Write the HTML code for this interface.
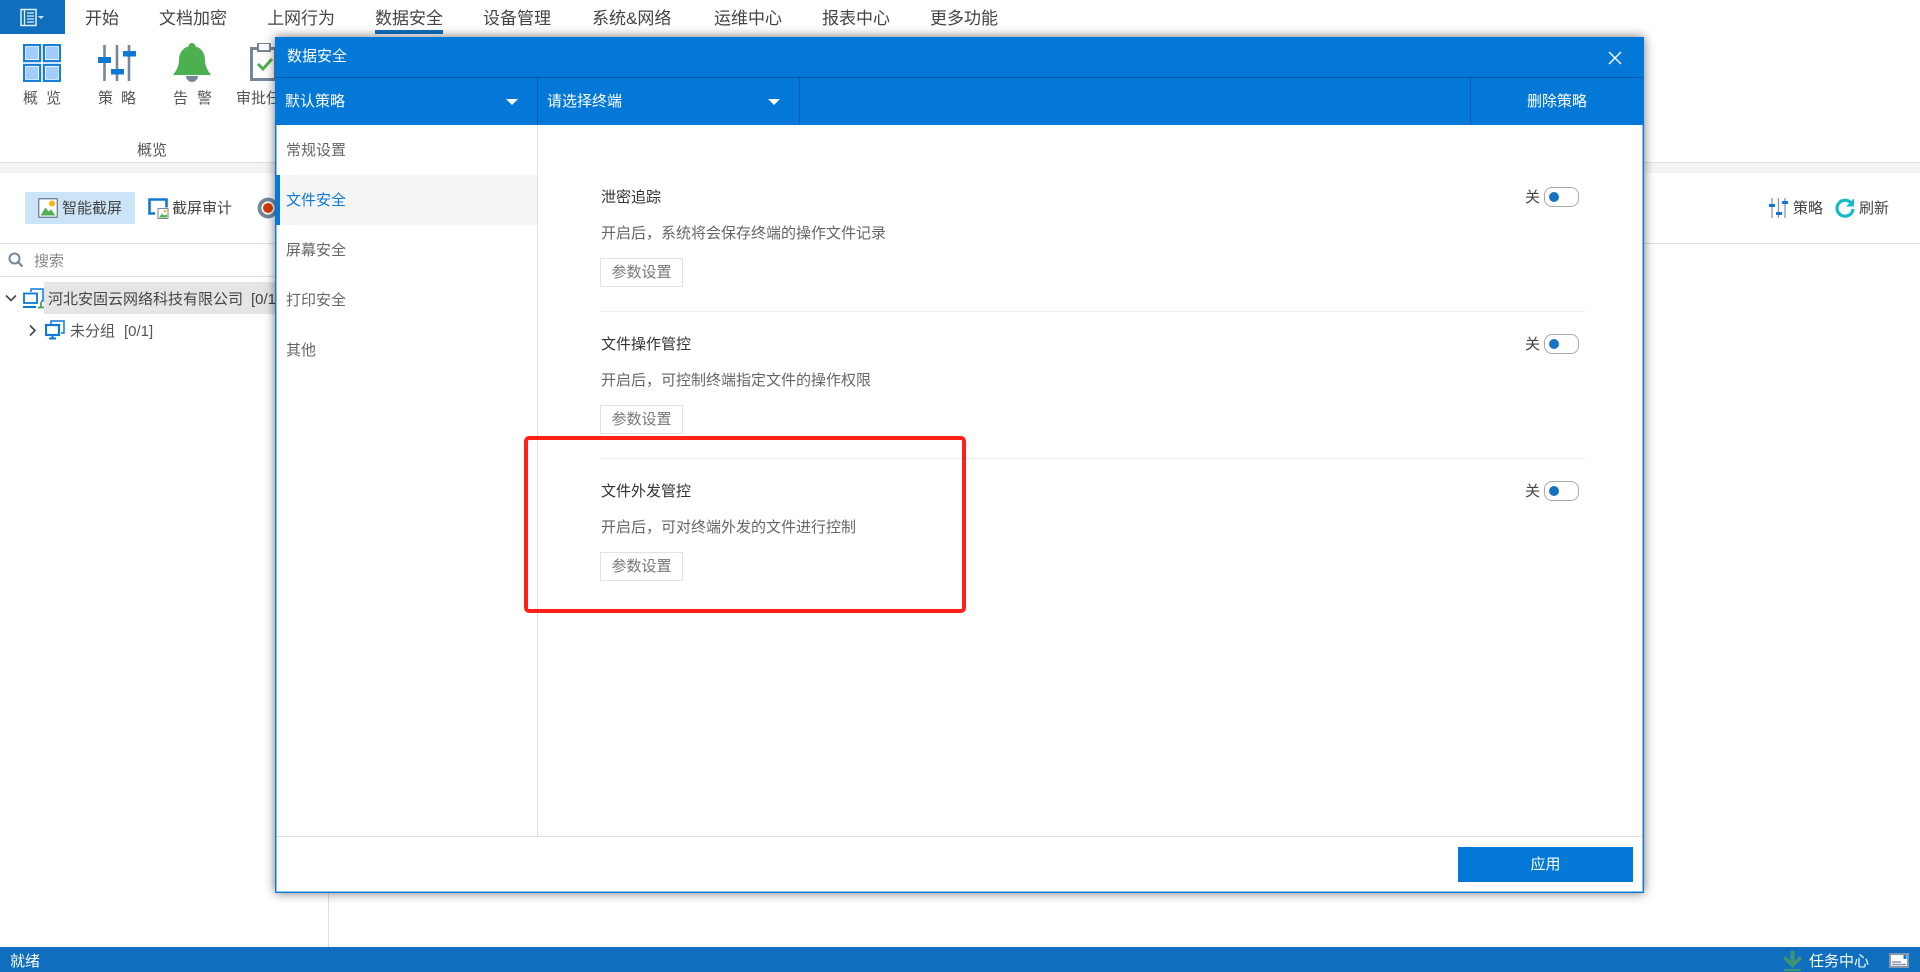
<!DOCTYPE html>
<html lang="zh-CN">
<head>
<meta charset="utf-8">
<title>数据安全</title>
<style>
html,body{margin:0;padding:0;width:1920px;height:972px;overflow:hidden;background:#fff;}
body{position:relative;font-family:"Liberation Sans","Noto Sans CJK SC","WenQuanYi Zen Hei",sans-serif;color:#444;}
.a{position:absolute;}
.t{position:absolute;line-height:20px;height:20px;white-space:nowrap;}
.tab{font-size:17px;color:#444;top:9px;}
.rl{font-size:15px;color:#555;top:89px;}
.tb{font-size:15px;color:#444;top:199px;}
.w{color:#fff;font-size:15px;}
.side{font-size:15px;color:#666;left:286px;}
.h{font-size:15px;color:#333;left:601px;}
.d{font-size:15px;color:#666;left:601px;}
.btn{position:absolute;left:600px;width:81px;height:27px;border:1px solid #e2e2e2;font-size:15px;line-height:27px;color:#777;text-align:center;}
.line{position:absolute;left:600px;width:985px;height:1px;background:#eee;}
.tog{position:absolute;left:1544px;width:33px;height:18px;border:1px solid #aaa;border-radius:8px;background:#fff;}
.tog i{position:absolute;left:4px;top:4px;width:10px;height:10px;border-radius:50%;background:#1573c5;}
svg{position:absolute;display:block;}
</style>
</head>
<body>
<!-- top tabs -->
<div class="a" style="left:0;top:0;width:65px;height:34px;background:#106ebe;"></div>
<svg style="left:19px;top:8px" width="28" height="19" viewBox="0 0 28 19"><path d="M2 1.500h15v16H2z" fill="none" stroke="#e4f0fb" stroke-width="1.500"/><path d="M5.500 1.500v16M8 5h7M8 8h7M8 11h7M8 14h7" stroke="#e4f0fb" stroke-width="1.300"/><path d="M19 8h6l-3 3z" fill="#cfe3f5"/></svg>
<div class="t tab" style="left:85px">开始</div>
<div class="t tab" style="left:159px">文档加密</div>
<div class="t tab" style="left:267px">上网行为</div>
<div class="t tab" style="left:375px">数据安全</div>
<div class="a" style="left:375px;top:30px;width:68px;height:4px;background:#106ebe"></div>
<div class="t tab" style="left:483px">设备管理</div>
<div class="t tab" style="left:592px">系统&amp;网络</div>
<div class="t tab" style="left:714px">运维中心</div>
<div class="t tab" style="left:822px">报表中心</div>
<div class="t tab" style="left:930px">更多功能</div>

<!-- ribbon icons -->
<svg style="left:23px;top:44px" width="38" height="38" viewBox="0 0 38 38">
<g fill="#fff" stroke="#1a7fdb" stroke-width="2.200"><rect x="1.100" y="1.100" width="16" height="16"/><rect x="20.900" y="1.100" width="16" height="16"/><rect x="1.100" y="20.900" width="16" height="16"/><rect x="20.900" y="20.900" width="16" height="16"/></g>
<g fill="#a2cdfb"><rect x="3" y="3" width="12.200" height="12.200"/><rect x="22.800" y="3" width="12.200" height="12.200"/><rect x="3" y="22.800" width="12.200" height="12.200"/><rect x="22.800" y="22.800" width="12.200" height="12.200"/></g></svg>
<svg style="left:98px;top:45px" width="38" height="36" viewBox="0 0 38 36">
<path d="M6.500 0v36M19 0v36M31 0v36" stroke="#76879b" stroke-width="2.600"/>
<rect x="0" y="12" width="13" height="6" fill="#0f78d4"/><rect x="13" y="24" width="13" height="5.500" fill="#0f78d4"/><rect x="25" y="6" width="13" height="5.500" fill="#0f78d4"/></svg>
<svg style="left:173px;top:43px" width="38" height="39" viewBox="0 0 38 39">
<path d="M19 0c2 0 3.500 1.500 3.500 3.500C29 5 32 11 32 17c0 5 2 10 6 15H0c4-5 6-10 6-15C6 11 9 5 15.500 3.500 15.500 1.500 17 0 19 0z" fill="#4caf50"/>
<path d="M13 33h12c0 3-2.500 6-6 6s-6-3-6-6z" fill="#76879b"/></svg>
<svg style="left:250px;top:43px" width="26" height="38" viewBox="0 0 26 38">
<path d="M1.500 5.500h24v31h-24z" fill="#fff" stroke="#76879b" stroke-width="3"/><rect x="8" y="0" width="12" height="8" fill="#fff" stroke="#76879b" stroke-width="2"/>
<path d="M8 21l5 5 9-10" fill="none" stroke="#4caf50" stroke-width="3"/></svg>
<div class="t rl" style="left:23px">概</div><div class="t rl" style="left:46px">览</div>
<div class="t rl" style="left:98px">策</div><div class="t rl" style="left:121px">略</div>
<div class="t rl" style="left:173px">告</div><div class="t rl" style="left:197px">警</div>
<div class="t rl" style="left:236px">审批任务</div>
<div class="t" style="left:137px;top:141px;font-size:15px;color:#555">概览</div>
<div class="a" style="left:0;top:162px;width:1920px;height:1px;background:#e0e0e0"></div>
<div class="a" style="left:0;top:163px;width:1920px;height:10px;background:#f4f4f4"></div>

<!-- secondary toolbar -->
<div class="a" style="left:25px;top:192px;width:110px;height:32px;background:#cce4f7"></div>
<svg style="left:38px;top:198px" width="20" height="20" viewBox="0 0 20 20"><rect x=".7" y=".7" width="18.600" height="18.600" fill="#fff" stroke="#76879b" stroke-width="1.400"/><path d="M2.500 17.500l5-8 3 4 2.500-2 4.500 6z" fill="#4caf50"/><circle cx="14" cy="5.500" r="3" fill="#fbb315"/></svg>
<div class="t tb" style="left:62px">智能截屏</div>
<svg style="left:148px;top:198px" width="21" height="21" viewBox="0 0 21 21"><path d="M7 15.500H1.500V1.500h17v8" fill="none" stroke="#0f78d4" stroke-width="2.600"/><rect x="10" y="10.500" width="10" height="10" fill="#fff" stroke="#76879b"/><path d="M11 19.500l3-4 2 2 3-1v3z" fill="#4caf50"/><circle cx="17" cy="13" r="1.300" fill="#fbb315"/></svg>
<div class="t tb" style="left:172px">截屏审计</div>
<svg style="left:257px;top:197px" width="24" height="22" viewBox="0 0 24 22"><circle cx="11" cy="11" r="8.500" fill="#fff" stroke="#76879b" stroke-width="3.800"/><circle cx="11" cy="11" r="5" fill="#d83b01"/></svg>
<svg style="left:1769px;top:198px" width="19" height="20" viewBox="0 0 19 20"><path d="M3 0v20M9.500 0v20M16 0v20" stroke="#8a97a8" stroke-width="1.300"/><rect x="0" y="6" width="6" height="3" fill="#0f78d4"/><rect x="7" y="14" width="6" height="3" fill="#0f78d4"/><rect x="13" y="3" width="6" height="3" fill="#0f78d4"/></svg>
<div class="t" style="left:1793px;top:199px;font-size:15px;color:#444">策略</div>
<svg style="left:1835px;top:198px" width="20" height="20" viewBox="0 0 20 20"><path d="M16.500 5.500A8 8 0 1 0 18 11" fill="none" stroke="#13bcc8" stroke-width="3.200"/><path d="M19 .5v8h-8z" fill="#13bcc8"/></svg>
<div class="t" style="left:1859px;top:199px;font-size:15px;color:#444">刷新</div>
<div class="a" style="left:0;top:243px;width:1920px;height:1px;background:#e0e0e0"></div>

<!-- left tree -->
<svg style="left:8px;top:252px" width="16" height="16" viewBox="0 0 16 16"><circle cx="6.500" cy="6.500" r="5" fill="none" stroke="#76879b" stroke-width="2"/><path d="M10 10l4.500 4.500" stroke="#76879b" stroke-width="2.200"/></svg>
<div class="t" style="left:34px;top:252px;font-size:15px;color:#888">搜索</div>
<div class="a" style="left:0;top:276px;width:328px;height:1px;background:#e0e0e0"></div>
<div class="a" style="left:328px;top:244px;width:1px;height:703px;background:#ddd"></div>
<div class="a" style="left:44px;top:282px;width:232px;height:32px;background:#e5e5e5"></div>
<svg style="left:5px;top:294px" width="12" height="9" viewBox="0 0 12 9"><path d="M1 1.500l5 5 5-5" fill="none" stroke="#444" stroke-width="1.600"/></svg>
<svg style="left:23px;top:288px" width="21" height="21" viewBox="0 0 21 21"><path d="M8 4V1h12v12h-2" fill="none" stroke="#0f78d4" stroke-width="1.500"/><rect x="1" y="5.500" width="13" height="9.500" fill="#fff" stroke="#0f78d4" stroke-width="1.800"/><path d="M0 19h13" stroke="#0f78d4" stroke-width="2"/><path d="M15 19.500h6M18 14v5" stroke="#4c9a5a" stroke-width="1.800"/></svg>
<div class="t" style="left:48px;top:290px;font-size:15px;color:#444">河北安固云网络科技有限公司</div>
<div class="t" style="left:251px;top:290px;font-size:15px;color:#444">[0/1]</div>
<svg style="left:28px;top:324px" width="9" height="13" viewBox="0 0 9 13"><path d="M2 1.500l5 5-5 5" fill="none" stroke="#444" stroke-width="1.600"/></svg>
<svg style="left:45px;top:320px" width="20" height="20" viewBox="0 0 20 20"><path d="M6 4V1h13v12h-3" fill="none" stroke="#0f78d4" stroke-width="1.500"/><rect x="1" y="5" width="13" height="10" fill="#fff" stroke="#0f78d4" stroke-width="2.200"/><path d="M4 18.500h7M7.500 15v3" stroke="#0f78d4" stroke-width="2"/></svg>
<div class="t" style="left:70px;top:322px;font-size:15px;color:#555">未分组</div>
<div class="t" style="left:124px;top:322px;font-size:15px;color:#555">[0/1]</div>

<!-- status bar -->
<div class="a" style="left:0;top:947px;width:1920px;height:25px;background:#106ebe"></div>
<div class="t w" style="left:10px;top:952px">就绪</div>
<svg style="left:1783px;top:951px" width="20" height="20" viewBox="0 0 20 20"><path d="M7.500 0h4v10L16.500 5l2.500 2.500-9.500 9.500L0 7.500 2.500 5l5 5z" fill="#3f9474"/><rect x="1" y="18" width="17" height="2" fill="#3f9474"/></svg>
<div class="t w" style="left:1809px;top:952px">任务中心</div>
<svg style="left:1889px;top:953px" width="20" height="15" viewBox="0 0 20 15"><rect x="1" y="1" width="18" height="13" fill="#fff" stroke="#8796ad" stroke-width="2"/><rect x="14.500" y="2" width="3" height="4" fill="#0f78d4"/><path d="M3 9h9M3 11.500h14" stroke="#8796ad" stroke-width="1.600"/></svg>

<!-- dialog -->
<div class="a" style="left:275px;top:37px;width:1367px;height:854px;border:1px solid #0578d8;background:#fff;box-shadow:inset 0 0 0 1px rgba(5,120,216,.45),0 0 10px rgba(0,0,0,.55)"></div>
<div class="a" style="left:275px;top:37px;width:1369px;height:88px;background:#0478d7"></div>
<div class="t w" style="left:287px;top:47px">数据安全</div>
<svg style="left:1608px;top:51px" width="14" height="14" viewBox="0 0 14 14"><path d="M1 1l12 12M13 1L1 13" stroke="#fff" stroke-width="1.400"/></svg>
<div class="a" style="left:276px;top:77px;width:1367px;height:1px;background:#0b55a8"></div>
<div class="a" style="left:537px;top:78px;width:1px;height:47px;background:#0b55a8"></div>
<div class="a" style="left:799px;top:78px;width:1px;height:47px;background:#0b55a8"></div>
<div class="a" style="left:1470px;top:78px;width:1px;height:47px;background:#0b55a8"></div>
<div class="t w" style="left:285px;top:92px">默认策略</div>
<div class="a" style="left:506px;top:99px;width:0;height:0;border-left:6px solid transparent;border-right:6px solid transparent;border-top:6px solid #fff"></div>
<div class="t w" style="left:547px;top:92px">请选择终端</div>
<div class="a" style="left:768px;top:99px;width:0;height:0;border-left:6px solid transparent;border-right:6px solid transparent;border-top:6px solid #fff"></div>
<div class="t w" style="left:1527px;top:92px">删除策略</div>

<!-- dialog sidebar -->
<div class="a" style="left:537px;top:125px;width:1px;height:711px;background:#e0e0e0"></div>
<div class="a" style="left:277px;top:175px;width:260px;height:50px;background:#f5f5f5"></div>
<div class="a" style="left:275px;top:175px;width:5px;height:50px;background:#0478d7"></div>
<div class="t side" style="top:141px">常规设置</div>
<div class="t side" style="top:191px;color:#0f78d4">文件安全</div>
<div class="t side" style="top:241px">屏幕安全</div>
<div class="t side" style="top:291px">打印安全</div>
<div class="t side" style="top:341px">其他</div>

<!-- dialog content -->
<div class="t h" style="top:188px">泄密追踪</div>
<div class="t d" style="top:224px">开启后，系统将会保存终端的操作文件记录</div>
<div class="btn" style="top:258px">参数设置</div>
<div class="line" style="top:311px"></div>
<div class="t" style="left:1525px;top:188px;font-size:15px;color:#444">关</div>
<div class="tog" style="top:187px"><i></i></div>

<div class="t h" style="top:335px">文件操作管控</div>
<div class="t d" style="top:371px">开启后，可控制终端指定文件的操作权限</div>
<div class="btn" style="top:405px">参数设置</div>
<div class="line" style="top:458px"></div>
<div class="t" style="left:1525px;top:335px;font-size:15px;color:#444">关</div>
<div class="tog" style="top:334px"><i></i></div>

<div class="t h" style="top:482px">文件外发管控</div>
<div class="t d" style="top:518px">开启后，可对终端外发的文件进行控制</div>
<div class="btn" style="top:552px">参数设置</div>
<div class="t" style="left:1525px;top:482px;font-size:15px;color:#444">关</div>
<div class="tog" style="top:481px"><i></i></div>

<!-- dialog footer -->
<div class="a" style="left:277px;top:836px;width:1365px;height:1px;background:#e0e0e0"></div>
<div class="a" style="left:1458px;top:847px;width:175px;height:35px;background:#0478d7;color:#fff;font-size:15px;line-height:35px;text-align:center">应用</div>

<!-- red annotation -->
<div class="a" style="left:524px;top:436px;width:434px;height:169px;border:4px solid #ff2116;border-radius:5px"></div>
</body>
</html>
